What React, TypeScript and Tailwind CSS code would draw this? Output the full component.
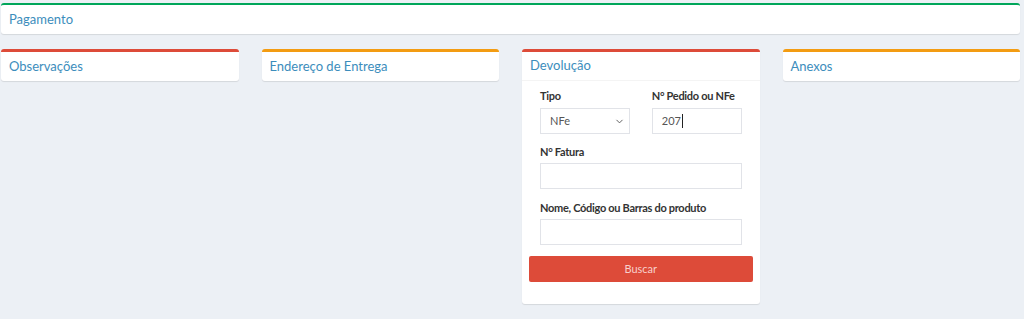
import { ChevronDown } from "lucide-react";

const font = { fontFamily: "Lato, 'Liberation Sans', sans-serif" };

function BoxHeader({ title, border }: { title: string; border?: boolean }) {
  return (
    <div
      className={
        "h-[29px] flex items-center px-[8px] text-[13px] text-[#3c8dbc] " +
        (border ? "border-b border-[#f4f4f4]" : "")
      }
    >
      {title}
    </div>
  );
}

export default function App() {
  return (
    <div className="bg-[#ecf0f5] h-[319px] w-full pt-[3px] overflow-hidden" style={font}>
      {/* Pagamento */}
      <div className="ml-[1px] mr-[4px] bg-white border-t-2 border-[#00a65a] rounded-[3px] shadow-[0_1px_1px_rgba(0,0,0,0.1)]">
        <div className="h-[29px] flex items-center px-[8px] text-[13px] text-[#3c8dbc]">
          Pagamento
        </div>
      </div>

      <div className="grid grid-cols-4 gap-[23px] pl-[1px] pr-[4px] mt-[15px] items-start">
        <div className="bg-white border-t-[3px] border-[#dd4b39] rounded-[3px] shadow-[0_1px_1px_rgba(0,0,0,0.1)]">
          <BoxHeader title="Observações" />
        </div>
        <div className="bg-white border-t-[3px] border-[#f39c12] rounded-[3px] shadow-[0_1px_1px_rgba(0,0,0,0.1)]">
          <BoxHeader title="Endereço de Entrega" />
        </div>

        {/* Devolução */}
        <div className="bg-white border-t-[3px] border-[#dd4b39] rounded-[3px] shadow-[0_1px_1px_rgba(0,0,0,0.1)]">
          <BoxHeader title="Devolução" border />
          <div className="px-[7px] pt-[9px] pb-[22px] text-[11px] text-[#333]">
            <div className="grid grid-cols-2">
              <div className="px-[11px]">
                <label className="block h-[12px] leading-[12px] font-bold tracking-[-0.3px]">Tipo</label>
                <div className="mt-[6px] h-[26px] border border-[#e1e3e8] flex items-center justify-between pl-[9px] pr-[4px] text-[#555]">
                  <span>NFe</span>
                  <ChevronDown size={11} strokeWidth={2} className="text-[#555]" />
                </div>
              </div>
              <div className="px-[11px]">
                <label className="block h-[12px] leading-[12px] font-bold tracking-[-0.3px]">N° Pedido ou NFe</label>
                <div className="mt-[6px] h-[26px] border border-[#e1e3e8] flex items-center pl-[9px] text-[#555]">
                  <span>207</span>
                  <span className="w-[1px] h-[14px] bg-[#222] ml-[1px]" />
                </div>
              </div>
            </div>

            <div className="px-[11px] mt-[12px]">
              <label className="block h-[12px] leading-[12px] font-bold tracking-[-0.3px]">N° Fatura</label>
              <div className="mt-[5px] h-[26px] border border-[#e1e3e8]" />
            </div>

            <div className="px-[11px] mt-[13px]">
              <label className="block h-[12px] leading-[12px] font-bold tracking-[-0.3px]">
                Nome, Código ou Barras do produto
              </label>
              <div className="mt-[5px] h-[26px] border border-[#e1e3e8]" />
            </div>

            <button className="mt-[11px] w-full h-[26px] bg-[#dd4b39] rounded-[2px] text-[#f8d0cb] text-[11px]">
              Buscar
            </button>
          </div>
        </div>

        <div className="bg-white border-t-[3px] border-[#f39c12] rounded-[3px] shadow-[0_1px_1px_rgba(0,0,0,0.1)]">
          <BoxHeader title="Anexos" />
        </div>
      </div>
    </div>
  );
}
